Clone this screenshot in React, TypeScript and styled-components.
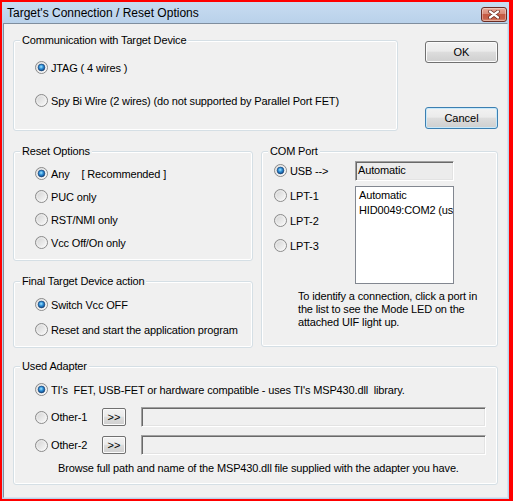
import React, { useId } from 'react';
import styled, { createGlobalStyle, css } from 'styled-components';

const GlobalStyle = createGlobalStyle`
  html, body {
    margin: 0;
    padding: 0;
  }

  body {
    font-family: 'Liberation Sans', Arial, sans-serif;
    font-size: 11px;
    letter-spacing: -0.15px;
    color: #000;
  }

  * {
    box-sizing: border-box;
  }
`;

const RadioMark = ({ checked }: { checked?: boolean }) => {
  const id = useId().replace(/[^a-zA-Z0-9]/g, '');
  return (
    <svg width="13" height="13" viewBox="0 0 13 13">
      <defs>
        <linearGradient id={`f${id}`} x1="0" y1="0" x2="1" y2="1">
          <stop offset="0" stopColor="#cfcfcf" />
          <stop offset="1" stopColor="#fdfdfd" />
        </linearGradient>
        <radialGradient id={`d${id}`} cx="0.45" cy="0.4" r="0.65">
          <stop offset="0" stopColor="#a6e8ff" />
          <stop offset="0.45" stopColor="#2e8fd8" />
          <stop offset="1" stopColor="#0c3a74" />
        </radialGradient>
      </defs>
      <circle cx="6.5" cy="6.5" r="6" fill={`url(#f${id})`} stroke="#8b8b8b" />
      <circle cx="6.5" cy="6.5" r="4.7" fill="none" stroke="#f7f7f7" strokeWidth="0.8" opacity="0.7" />
      {checked && (
        <circle cx="6.5" cy="6.5" r="3.4" fill={`url(#d${id})`} stroke="#173f72" strokeWidth="0.6" />
      )}
    </svg>
  );
};

type RadioProps = {
  checked?: boolean;
  width?: number;
  children: React.ReactNode;
};

const Radio = ({ checked, width, children }: RadioProps) => (
  <RadioRow $w={width}>
    <RadioMark checked={checked} />
    <span>{children}</span>
  </RadioRow>
);

const App = () => {
  return (
    <>
      <GlobalStyle />
      <Frame>
        <Window>
          <TitleBar>
            <Title>Target's Connection / Reset Options</Title>
            <CloseButton>
              <svg width="12" height="9" viewBox="0 0 12 9">
                <path d="M2 1.5 L10 7.5 M10 1.5 L2 7.5" stroke="#5d2219" strokeWidth="3.6" strokeLinecap="round" />
                <path d="M2 1.5 L10 7.5 M10 1.5 L2 7.5" stroke="#ffffff" strokeWidth="2.2" strokeLinecap="round" />
              </svg>
            </CloseButton>
          </TitleBar>
          <Body>
            <TopRow>
              <Group $w={385} $h={91}>
                <Legend>Communication with Target Device</Legend>
                <GroupContent $pt={18} $pl={21} $gap={16}>
                  <Radio checked>JTAG ( 4 wires )</Radio>
                  <Radio>Spy Bi Wire (2 wires) (do not supported by Parallel Port FET)</Radio>
                </GroupContent>
              </Group>
              <ButtonColumn>
                <DialogButton>OK</DialogButton>
                <DialogButton $default>Cancel</DialogButton>
              </ButtonColumn>
            </TopRow>

            <MiddleRow>
              <LeftColumn>
                <Group $w={240} $h={110}>
                  <Legend>Reset Options</Legend>
                  <GroupContent $pt={13} $pl={21} $gap={6}>
                    <Radio checked>
                      Any<Recommended>[ Recommended ]</Recommended>
                    </Radio>
                    <Radio>PUC only</Radio>
                    <Radio>RST/NMI only</Radio>
                    <Radio>Vcc Off/On only</Radio>
                  </GroupContent>
                </Group>
                <Group $w={240} $h={67}>
                  <Legend>Final Target Device action</Legend>
                  <GroupContent $pt={14} $pl={21} $gap={8}>
                    <Radio checked>Switch Vcc OFF</Radio>
                    <Radio>Reset and start the application program</Radio>
                  </GroupContent>
                </Group>
              </LeftColumn>

              <Group $w={237} $h={196}>
                <Legend>COM Port</Legend>
                <GroupContent $pt={9} $pl={12} $gap={0}>
                  <PortArea>
                    <PortRadios>
                      <Radio checked>USB --&gt;</Radio>
                      <Radio>LPT-1</Radio>
                      <Radio>LPT-2</Radio>
                      <Radio>LPT-3</Radio>
                    </PortRadios>
                    <PortLists>
                      <ReadOnlyBox>Automatic</ReadOnlyBox>
                      <ListBox>
                        <ListItem>Automatic</ListItem>
                        <ListItem>HID0049:COM2 (us</ListItem>
                      </ListBox>
                    </PortLists>
                  </PortArea>
                  <PortHint>
                    To identify a connection, click a port in
                    <br />
                    the list to see the Mode LED on the
                    <br />
                    attached UIF light up.
                  </PortHint>
                </GroupContent>
              </Group>
            </MiddleRow>

            <Group $h={119} $mt={18}>
              <Legend>Used Adapter</Legend>
              <GroupContent $pt={14} $pl={21} $pr={11} $gap={0}>
                <Radio checked>TI's  FET, USB-FET or hardware compatible - uses TI's MSP430.dll  library.</Radio>
                <AdapterRow $mt={9}>
                  <Radio width={67}>Other-1</Radio>
                  <BrowseButton>&gt;&gt;</BrowseButton>
                  <PathInput />
                </AdapterRow>
                <AdapterRow $mt={8}>
                  <Radio width={67}>Other-2</Radio>
                  <BrowseButton>&gt;&gt;</BrowseButton>
                  <PathInput />
                </AdapterRow>
                <AdapterHint>
                  Browse full path and name of the MSP430.dll file supplied with the adapter you have.
                </AdapterHint>
              </GroupContent>
            </Group>
          </Body>
        </Window>
      </Frame>
    </>
  );
};

const Frame = styled.div`
  display: flex;
  width: 513px;
  height: 501px;
  border: solid #ff0000;
  border-width: 2px 4px 2px 2px;
  background: #ff0000;
`;

const Window = styled.div`
  flex: 1;
  display: flex;
  flex-direction: column;
  background: #bcd2ea;
`;

const TitleBar = styled.div`
  display: flex;
  justify-content: space-between;
  align-items: center;
  height: 21px;
  padding: 0 2px 0 5px;
  background: linear-gradient(#c8dcf1, #b9d1ea);
`;

const Title = styled.div`
  font-size: 12px;
  letter-spacing: 0;
  line-height: 15px;
  padding-top: 1px;
`;

const CloseButton = styled.div`
  display: flex;
  justify-content: center;
  align-items: center;
  width: 26px;
  height: 15px;
  margin-top: 3px;
  border: 1px solid #6b2c24;
  border-radius: 3px;
  background: linear-gradient(#e9aa9b 0%, #d98b78 45%, #c65a43 50%, #c7604a 80%, #dc8f74 100%);
  box-shadow: inset 0 0 0 1px rgba(255, 255, 255, 0.35);
`;

const Body = styled.div`
  flex: 1;
  display: flex;
  flex-direction: column;
  margin: 0 1px 1px 1px;
  padding: 16px 9px 0 9px;
  border: 1px solid;
  border-color: #7f8e9e #d6e3f0 #d6e3f0 #7f8e9e;
  background: #f0f0f0;
`;

const TopRow = styled.div`
  display: flex;
  justify-content: space-between;
  align-items: flex-start;
`;

const MiddleRow = styled.div`
  display: flex;
  gap: 8px;
  margin-top: 20px;
`;

const LeftColumn = styled.div`
  display: flex;
  flex-direction: column;
  gap: 20px;
`;

const Group = styled.div<{ $w?: number; $h: number; $mt?: number }>`
  position: relative;
  flex-shrink: 0;
  width: ${p => (p.$w ? `${p.$w}px` : 'auto')};
  height: ${p => p.$h}px;
  margin-top: ${p => p.$mt || 0}px;
  border: 1px solid #d5dfe5;
  border-radius: 3px;
  box-shadow: inset 0 0 0 1px #ffffff;
`;

const Legend = styled.span`
  position: absolute;
  top: -7px;
  left: 6px;
  padding: 0 2px;
  line-height: 13px;
  white-space: nowrap;
  background: #f0f0f0;
`;

const GroupContent = styled.div<{ $pt: number; $pl: number; $pr?: number; $gap: number }>`
  display: flex;
  flex-direction: column;
  gap: ${p => p.$gap}px;
  padding: ${p => `${p.$pt}px ${p.$pr || 0}px 0 ${p.$pl}px`};
`;

const RadioRow = styled.label<{ $w?: number }>`
  display: flex;
  align-items: center;
  gap: 3px;
  flex-shrink: 0;
  width: ${p => (p.$w ? `${p.$w}px` : 'auto')};
  height: 17px;
  white-space: pre;

  svg {
    flex-shrink: 0;
  }
`;

const Recommended = styled.span`
  margin-left: 12px;
`;

const ButtonColumn = styled.div`
  display: flex;
  flex-direction: column;
  gap: 44px;
  padding-top: 1px;
`;

const buttonFace = css`
  padding: 0;
  font: inherit;
  color: #000;
  border: 1px solid #707070;
  border-radius: 3px;
  background: linear-gradient(#f2f2f2 0%, #ebebeb 46%, #dddddd 50%, #cfcfcf 100%);
  box-shadow: inset 0 0 0 1px #fbfbfb;
`;

const DialogButton = styled.button<{ $default?: boolean }>`
  ${buttonFace};
  width: 73px;
  height: 22px;

  ${p =>
    p.$default &&
    css`
      border-color: #3c7fb1;
      box-shadow: inset 0 0 0 1px #c7e9fb;
    `}
`;

const BrowseButton = styled.button`
  ${buttonFace};
  flex-shrink: 0;
  width: 24px;
  height: 18px;
  border-radius: 2px;
  line-height: 14px;
`;

const sunken = css`
  border: 1px solid;
  border-color: #a0a0a0 #ffffff #ffffff #a0a0a0;
  box-shadow: inset 1px 1px 0 #696969, inset -1px -1px 0 #e3e3e3;
`;

const PortArea = styled.div`
  display: flex;
`;

const PortRadios = styled.div`
  display: flex;
  flex-direction: column;
  gap: 8px;
  width: 81px;
  padding-top: 1px;
`;

const PortLists = styled.div`
  display: flex;
  flex-direction: column;
  gap: 5px;
  width: 99px;
`;

const ReadOnlyBox = styled.div`
  ${sunken};
  height: 20px;
  padding: 2px 0 0 2px;
  line-height: 13px;
  background: #ececec;
`;

const ListBox = styled.div`
  height: 98px;
  padding: 1px 0 0 3px;
  overflow: hidden;
  border: 1px solid #828790;
  background: #ffffff;
`;

const ListItem = styled.div`
  line-height: 15px;
  white-space: nowrap;
`;

const PortHint = styled.div`
  margin: 6px 0 0 24px;
  line-height: 13px;
  white-space: nowrap;
`;

const AdapterRow = styled.div<{ $mt: number }>`
  display: flex;
  align-items: center;
  height: 20px;
  margin-top: ${p => p.$mt}px;
`;

const PathInput = styled.div`
  ${sunken};
  flex: 1;
  height: 20px;
  margin-left: 15px;
  background: #f0f0f0;
`;

const AdapterHint = styled.div`
  margin-top: 7px;
  padding-left: 23px;
  line-height: 13px;
  white-space: nowrap;
`;

export default App;
